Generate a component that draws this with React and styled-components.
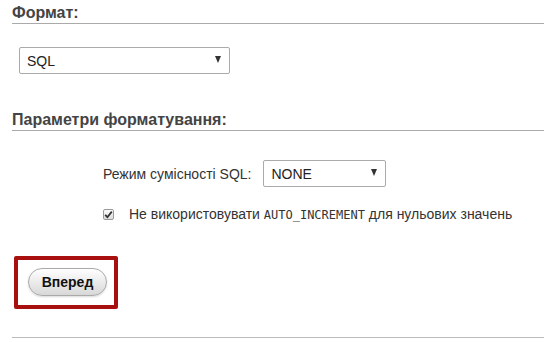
import React from 'react';
import styled, { createGlobalStyle } from 'styled-components';

const GlobalStyle = createGlobalStyle`
    body {
        margin: 0;
        background: #fff;
        font-family: 'Liberation Sans', Arial, sans-serif;
        color: #444;
    }
`;

const Page = styled.div`
    width: 544px;
    height: 342px;
    padding-left: 12px;
    box-sizing: border-box;
    overflow: hidden;
`;

const Heading = styled.h2`
    margin: ${(p) => p.$top}px 0 0;
    padding-bottom: 1px;
    font-size: 16px;
    font-weight: bold;
    line-height: 19px;
    color: #444;
    border-bottom: 1px solid #aaa;
`;

const SelectWrap = styled.div`
    position: relative;
    display: inline-block;
    width: ${(p) => p.$width}px;
`;

const Select = styled.select`
    appearance: none;
    width: 100%;
    height: 27px;
    padding: 0 20px 0 7px;
    border: 1px solid #aaa;
    border-radius: 2px;
    background: #fff;
    font-family: 'Liberation Sans', Arial, sans-serif;
    font-size: 14px;
    color: #222;
    outline: none;
`;

const Arrow = styled.span`
    position: absolute;
    right: 9px;
    top: 9px;
    width: 0;
    height: 0;
    border-left: 3px solid transparent;
    border-right: 3px solid transparent;
    border-top: 7px solid #333;
    pointer-events: none;
`;

const FormatRow = styled.div`
    margin: 23px 0 0 7px;
`;

const Options = styled.div`
    padding: 29px 0 0 91px;
    font-size: 14px;
    color: #333;
`;

const OptionRow = styled.div`
    display: flex;
    align-items: center;
    gap: ${(p) => p.$gap}px;
    margin-top: ${(p) => p.$top || 0}px;
`;

const CheckBox = styled.span`
    display: inline-flex;
    align-items: center;
    justify-content: center;
    width: 11px;
    height: 11px;
    border: 1px solid #999;
    border-radius: 2px;
    background: linear-gradient(#fbfbfb, #dcdcdc);
    box-sizing: border-box;
`;

const Code = styled.code`
    font-family: 'DejaVu Sans Mono', 'Liberation Mono', monospace;
    font-size: 12px;
`;

const Highlight = styled.div`
    display: inline-flex;
    margin: 34px 0 0 2px;
    padding: 8px 7px 9px 10px;
    border: 4px solid #a81010;
    border-radius: 2px;
`;

const Button = styled.button`
    width: 79px;
    height: 28px;
    border: 1px solid #aaa;
    border-radius: 14px;
    background: linear-gradient(#ffffff, #d8d8d8);
    box-shadow: 0 1px 2px rgba(0, 0, 0, 0.15);
    font-family: 'Liberation Sans', Arial, sans-serif;
    font-size: 14px;
    font-weight: bold;
    color: #111;
    cursor: pointer;
`;

const Divider = styled.div`
    margin-top: 28px;
    border-top: 1px solid #bbb;
`;

const App = () => {
    return (
        <Page>
            <GlobalStyle />
            <Heading $top={3}>Формат:</Heading>
            <FormatRow>
                <SelectWrap $width={211}>
                    <Select defaultValue="sql">
                        <option value="sql">SQL</option>
                    </Select>
                    <Arrow />
                </SelectWrap>
            </FormatRow>

            <Heading $top={36}>Параметри форматування:</Heading>
            <Options>
                <OptionRow $gap={12}>
                    <span>Режим сумісності SQL:</span>
                    <SelectWrap $width={123}>
                        <Select defaultValue="NONE">
                            <option value="NONE">NONE</option>
                        </Select>
                        <Arrow />
                    </SelectWrap>
                </OptionRow>
                <OptionRow $gap={15} $top={19}>
                    <CheckBox>
                        <svg width="9" height="9" viewBox="0 0 9 9">
                            <path d="M1.2 4.8 L3.4 7.2 L7.8 1.6" fill="none" stroke="#333" strokeWidth="1.8" />
                        </svg>
                    </CheckBox>
                    <span>
                        Не використовувати <Code>AUTO_INCREMENT</Code> для нульових значень
                    </span>
                </OptionRow>
            </Options>

            <Highlight>
                <Button>Вперед</Button>
            </Highlight>
            <Divider />
        </Page>
    );
};

export default App;
